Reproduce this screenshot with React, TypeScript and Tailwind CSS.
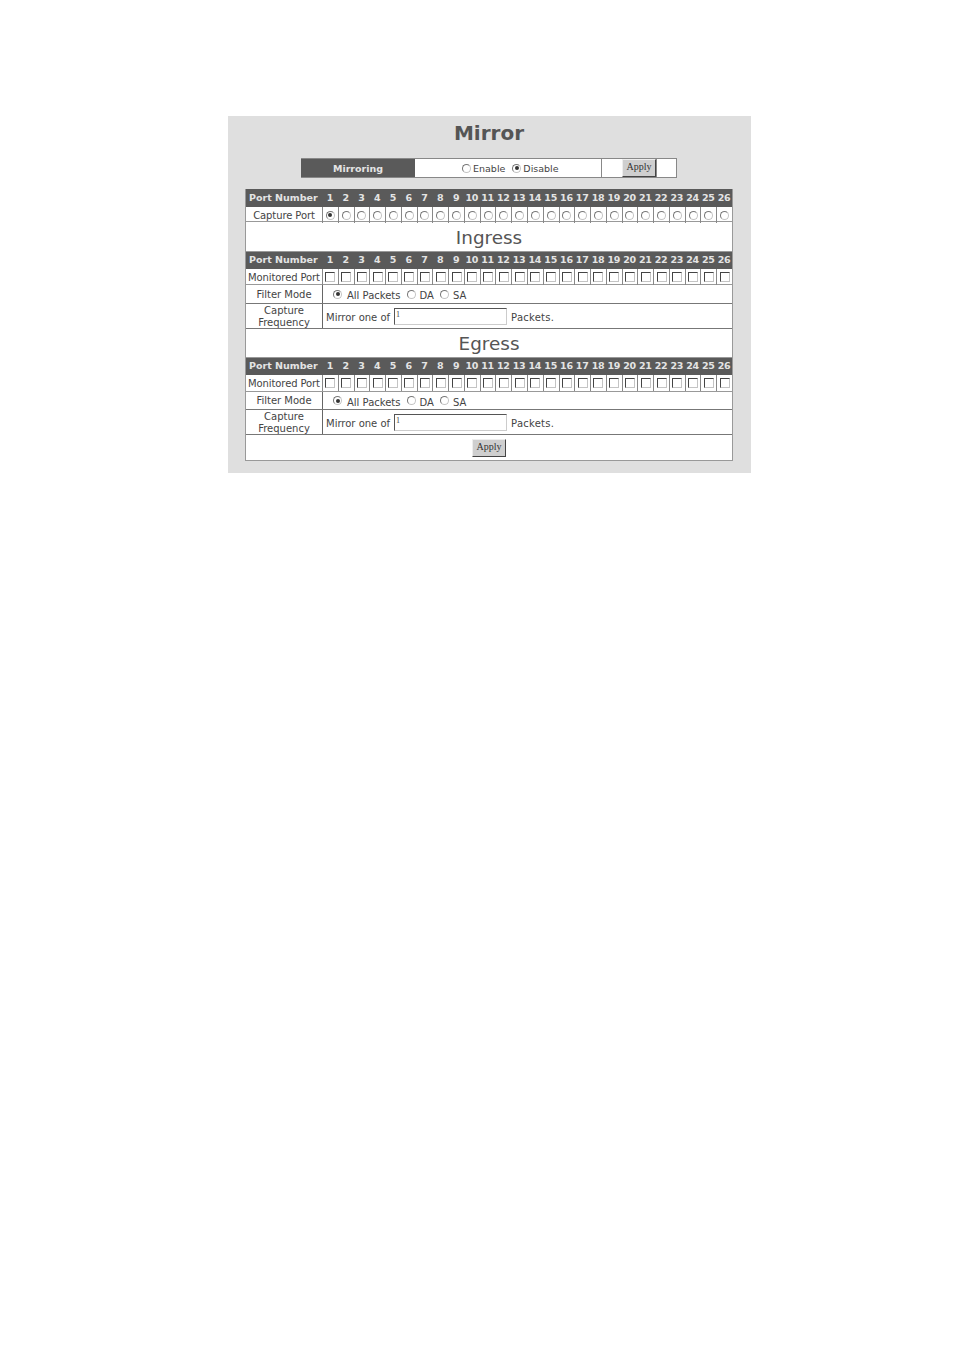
const ports = Array.from({ length: 26 }, (_, i) => i + 1);
const font = { fontFamily: '"DejaVu Sans", Verdana, sans-serif' };

function Radio({ checked = false }: { checked?: boolean }) {
  return (
    <span className="flex h-[9px] w-[9px] shrink-0 items-center justify-center rounded-full border border-[#777] border-b-[#c4c4c4] border-r-[#c4c4c4] bg-white">
      {checked && <span className="h-[4px] w-[4px] rounded-full bg-[#333]" />}
    </span>
  );
}

function Check() {
  return <span className="block h-[10px] w-[10px] border border-[#444] border-b-[#c4c4c4] border-r-[#c4c4c4] bg-white" />;
}

function ApplyButton() {
  return (
    <button
      className="flex h-[18px] w-[34px] items-center justify-center border border-[#eee] border-b-[#444] border-r-[#444] bg-[#cfcfcf] pb-[3px] text-[10px] text-[#333]"
      style={{ fontFamily: '"Liberation Serif", serif' }}
    >
      Apply
    </button>
  );
}

function HeaderRow({ tall = false }: { tall?: boolean }) {
  return (
    <div className={`grid ${tall ? "h-[18px]" : "h-[17px]"} grid-cols-[76px_repeat(26,1fr)] items-center bg-[#5a5a5a] text-[9.5px] font-bold text-[#e4e4e4]`}>
      <span className="whitespace-nowrap pl-[3px]">Port Number</span>
      {ports.map((p) => (
        <span key={p} className="text-center tracking-[-0.3px]">{p}</span>
      ))}
    </div>
  );
}

function CellRow({ label, radio, height }: { label: string; radio?: boolean; height: string }) {
  return (
    <div className={`grid ${height} grid-cols-[76px_repeat(26,1fr)] items-stretch border-b border-[#999] text-[10px] tracking-[-0.1px] text-[#444]`}>
      <span className="flex items-center justify-center whitespace-nowrap pt-[1px]">{label}</span>
      {ports.map((p) => (
        <span key={p} className="flex items-center justify-center border-l border-[#888]">
          {radio ? <Radio checked={p === 1} /> : <Check />}
        </span>
      ))}
    </div>
  );
}

function Section({ title, titleH, monitorH, filterH }: { title: string; titleH: string; monitorH: string; filterH: string }) {
  return (
    <>
      <div className={`flex ${titleH} items-center justify-center border-b border-[#999] pt-[2px] text-[18.4px] text-[#555]`}>{title}</div>
      <HeaderRow />
      <CellRow label="Monitored Port" height={monitorH} />
      <div className={`flex ${filterH} border-b border-[#777] text-[10px] text-[#444]`}>
        <span className="flex w-[77px] items-center justify-center border-r border-[#666]">Filter Mode</span>
        <span className="flex items-center pl-[10px]">
          <Radio checked />
          <span className="ml-[5px] mt-[3px]">All Packets</span>
          <span className="ml-[6px]"><Radio /></span>
          <span className="ml-[4px] mt-[3px]">DA</span>
          <span className="ml-[6px]"><Radio /></span>
          <span className="ml-[4px] mt-[3px]">SA</span>
        </span>
      </div>
      <div className="flex h-[25px] border-b border-[#777] text-[10px] text-[#444]">
        <span className="flex w-[77px] flex-col items-center justify-center border-r border-[#666] pt-[2px] leading-[12px]">
          <span>Capture</span>
          <span>Frequency</span>
        </span>
        <span className="flex items-center pl-[3px]">
          <span className="mt-[3px]">Mirror one of</span>
          <span className="ml-[4px] h-[17px] w-[113px] border border-[#555] border-b-[#ccc] border-r-[#ccc] bg-white pl-[1px] text-[8px] leading-[11px]" style={{ fontFamily: '"Liberation Serif", serif' }}>1</span>
          <span className="ml-[4px] mt-[3px] tracking-[0.25px]">Packets.</span>
        </span>
      </div>
    </>
  );
}

export default function App() {
  return (
    <div className="min-h-[1351px] bg-white pl-[228px] pt-[116px]" style={font}>
      <div className="h-[357px] w-[523px] bg-[#dfdfdf] pl-[17px] pt-[5px]">
        <h1 className="w-[488px] text-center text-[20px] font-bold leading-[25px] text-[#555]">Mirror</h1>
        <div className="ml-[56px] mt-[12px] flex h-[20px] w-[376px] border border-l-0 border-[#888] bg-white text-[9.5px] text-[#444]">
          <span className="flex w-[114px] items-center justify-center bg-[#5a5a5a] pt-[2px] font-bold text-[#e4e4e4]">Mirroring</span>
          <span className="flex w-[187px] items-center border-r border-[#888] pl-[47px]">
            <Radio />
            <span className="ml-[2px] mt-[3px]">Enable</span>
            <span className="ml-[7px]"><Radio checked /></span>
            <span className="ml-[2px] mt-[3px]">Disable</span>
          </span>
          <span className="flex w-[55px] items-center justify-end border-r border-[#888]">
            <ApplyButton />
          </span>
        </div>
        <div className="mt-[11px] h-[272px] w-[488px] border-x border-b border-[#999] bg-white">
          <HeaderRow tall />
          <CellRow label="Capture Port" radio height="h-[15px]" />
          <Section title="Ingress" titleH="h-[30px]" monitorH="h-[16px]" filterH="h-[19px]" />
          <Section title="Egress" titleH="h-[29px]" monitorH="h-[17px]" filterH="h-[18px]" />
          <div className="flex h-[25px] items-center justify-center">
            <ApplyButton />
          </div>
        </div>
      </div>
    </div>
  );
}
